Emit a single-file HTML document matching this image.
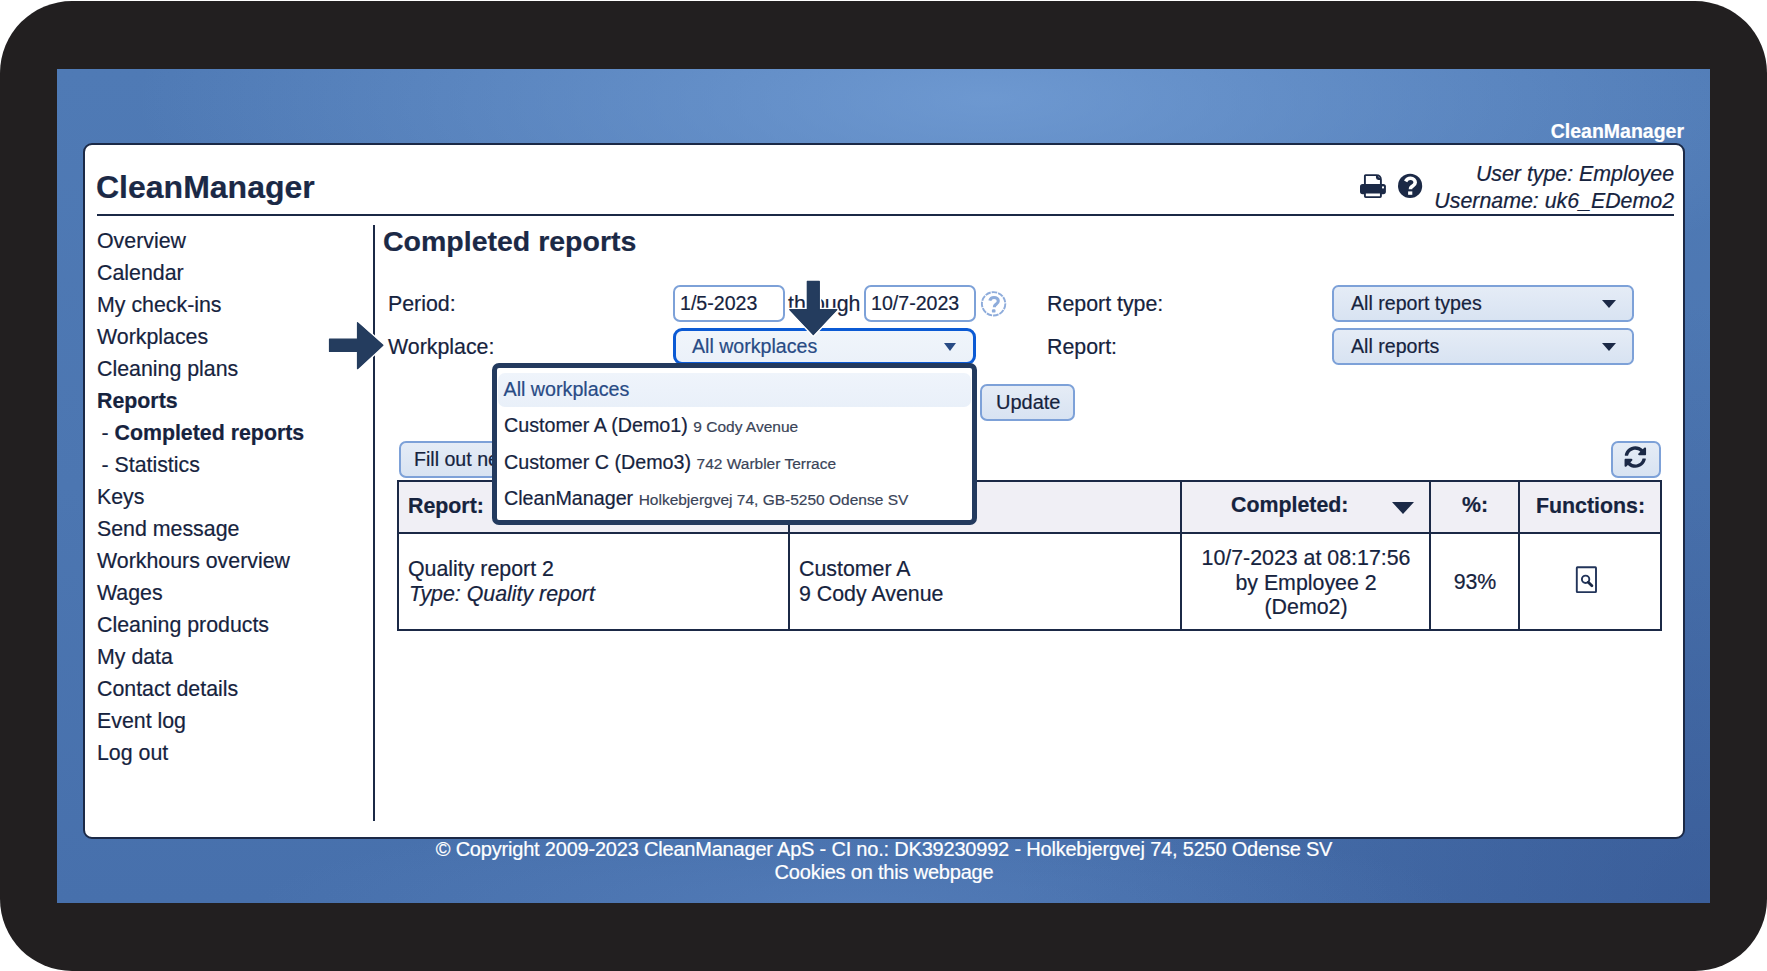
<!DOCTYPE html>
<html><head><meta charset="utf-8">
<style>
html,body{margin:0;padding:0;width:1767px;height:971px;overflow:hidden;background:#fff;}
body{position:relative;font-family:"Liberation Sans",sans-serif;color:#16233e;-webkit-text-stroke:0.2px currentColor;}
.a{position:absolute;white-space:nowrap;}
#frame{position:absolute;left:0;top:1px;width:1767px;height:970px;background:#221f20;border-radius:72px;}
#bg{position:absolute;left:57px;top:69px;width:1653px;height:834px;overflow:hidden;
 background:
  radial-gradient(ellipse 850px 240px at 930px 30px, rgba(122,165,220,0.7), rgba(122,165,220,0) 100%),
  radial-gradient(ellipse 600px 90px at 800px 834px, rgba(100,140,200,0.35), rgba(100,140,200,0) 100%),
  radial-gradient(ellipse 700px 600px at 1653px 834px, rgba(35,60,120,0.35), rgba(35,60,120,0) 100%),
  linear-gradient(180deg,#4f7ab5 0%,#4c76b1 50%,#4770ac 100%);}
#panel{position:absolute;left:83px;top:143px;width:1598px;height:692px;background:#fff;border:2px solid #1b2946;border-radius:9px;}
.t21{font-size:21.35px;line-height:21px;margin-top:1px;}
.t20{font-size:19.6px;line-height:20px;}
.b{font-weight:bold;}
.i{font-style:italic;}
.menu{position:absolute;left:97px;margin-top:1px;font-size:21.35px;line-height:21px;white-space:nowrap;}
.inp{position:absolute;box-sizing:border-box;border:2px solid #7da1d8;border-radius:7px;background:#fff;}
.sel{position:absolute;box-sizing:border-box;border:2px solid #7da1d8;border-radius:6.5px;background:linear-gradient(180deg,#e5ecf6,#d8e3f2);}
.caret{position:absolute;width:0;height:0;border-left:7px solid transparent;border-right:7px solid transparent;border-top:8px solid #1b2946;}
.btn{position:absolute;box-sizing:border-box;border:2px solid #7da1d8;border-radius:7px;background:linear-gradient(180deg,#e5ecf6,#d8e3f2);}
</style></head><body>
<div id="frame"></div>
<div id="bg"></div>
<div class="a b" style="left:1500px;width:1184px;left:500px;text-align:right;top:121px;font-size:19.5px;line-height:20px;color:#fff;">CleanManager</div>
<div id="panel"></div>

<!-- header -->
<div class="a b" style="left:96px;top:171px;font-size:32px;line-height:32px;color:#1b2946;">CleanManager</div>
<div class="a" style="left:97px;top:214px;width:1577px;height:2px;background:#1b2946;"></div>
<div class="a i t21" style="left:1274px;width:400px;text-align:right;top:163px;">User type: Employee</div>
<div class="a i t21" style="left:1274px;width:400px;text-align:right;top:190px;">Username: uk6_EDemo2</div>

<!-- sidebar -->
<div class="a" style="left:373px;top:225px;width:2px;height:596px;background:#1b2946;"></div>
<div class="menu" style="top:230px">Overview</div>
<div class="menu" style="top:262px">Calendar</div>
<div class="menu" style="top:294px">My check-ins</div>
<div class="menu" style="top:326px">Workplaces</div>
<div class="menu" style="top:358px">Cleaning plans</div>
<div class="menu b" style="top:390px">Reports</div>
<div class="menu" style="top:422px;left:95.5px">&nbsp;- <b>Completed reports</b></div>
<div class="menu" style="top:454px;left:95.5px">&nbsp;- Statistics</div>
<div class="menu" style="top:486px">Keys</div>
<div class="menu" style="top:518px">Send message</div>
<div class="menu" style="top:550px">Workhours overview</div>
<div class="menu" style="top:582px">Wages</div>
<div class="menu" style="top:614px">Cleaning products</div>
<div class="menu" style="top:646px">My data</div>
<div class="menu" style="top:678px">Contact details</div>
<div class="menu" style="top:710px">Event log</div>
<div class="menu" style="top:742px">Log out</div>


<!-- content -->
<div class="a b" style="left:383px;top:227px;font-size:28.5px;line-height:28px;color:#1b2946;">Completed reports</div>
<div class="a t21" style="left:388px;top:293px;">Period:</div>
<div class="a t21" style="left:388px;top:336px;">Workplace:</div>
<div class="inp" style="left:673px;top:285px;width:112px;height:37px;"></div>
<div class="a t20" style="left:680px;top:293px;">1/5-2023</div>
<div class="a t21" style="left:788px;top:293px;">through</div>
<div class="inp" style="left:864px;top:285px;width:112px;height:37px;"></div>
<div class="a t20" style="left:871px;top:293px;">10/7-2023</div>
<div class="a t21" style="left:1047px;top:293px;">Report type:</div>
<div class="a t21" style="left:1047px;top:336px;">Report:</div>
<div class="sel" style="left:1332px;top:285px;width:302px;height:37px;"></div>
<div class="a t20" style="left:1351px;top:293px;">All report types</div>
<div class="caret" style="left:1602px;top:300px;"></div>
<div class="sel" style="left:1332px;top:328px;width:302px;height:37px;"></div>
<div class="a t20" style="left:1351px;top:336px;">All reports</div>
<div class="caret" style="left:1602px;top:343px;"></div>
<div class="sel" style="left:673px;top:328px;width:303px;height:37px;border:3.6px solid #0b5ad4;border-radius:9px;background:linear-gradient(180deg,#f0f5fb,#ebf1f9);"></div>
<div class="a t20" style="left:692px;top:336px;color:#284b85;">All workplaces</div>
<div class="caret" style="left:943.5px;top:342.5px;border-left-width:6.8px;border-right-width:6.8px;border-top-width:8px;border-top-color:#284b85;"></div>
<div class="btn" style="left:980px;top:384px;width:95px;height:37px;"></div>
<div class="a" style="left:996px;top:392px;font-size:20px;line-height:20px;">Update</div>
<div class="btn" style="left:399px;top:441px;width:120px;height:37px;"></div>
<div class="a t20" style="left:414px;top:449px;">Fill out new</div>
<div class="btn" style="left:1611px;top:441px;width:50px;height:37px;"></div>

<!-- table -->
<div class="a" style="left:398px;top:481px;width:1262px;height:51px;background:#f0eff5;"></div>
<div class="a" style="left:397px;top:480px;width:1265px;height:2px;background:#1b2946;"></div>
<div class="a" style="left:397px;top:532px;width:1265px;height:2px;background:#1b2946;"></div>
<div class="a" style="left:397px;top:629px;width:1265px;height:2px;background:#1b2946;"></div>
<div class="a" style="left:397px;top:480px;width:2px;height:151px;background:#1b2946;"></div>
<div class="a" style="left:1660px;top:480px;width:2px;height:151px;background:#1b2946;"></div>
<div class="a" style="left:788px;top:480px;width:2px;height:151px;background:#1b2946;"></div>
<div class="a" style="left:1180px;top:480px;width:2px;height:151px;background:#1b2946;"></div>
<div class="a" style="left:1429px;top:480px;width:2px;height:151px;background:#1b2946;"></div>
<div class="a" style="left:1518px;top:480px;width:2px;height:151px;background:#1b2946;"></div>
<div class="a b t21" style="left:408px;top:495px;">Report:</div>
<div class="a b t21" style="left:1231px;top:494px;">Completed:</div>
<div class="caret" style="left:1392px;top:502px;border-left-width:11.5px;border-right-width:11.5px;border-top-width:12px;"></div>
<div class="a b t21" style="left:1431px;width:88px;text-align:center;top:494px;">%:</div>
<div class="a b t21" style="left:1520px;width:141px;text-align:center;top:495px;">Functions:</div>
<div class="a t21" style="left:408px;top:558px;">Quality report 2</div>
<div class="a t21 i" style="left:409px;top:583px;">Type: Quality report</div>
<div class="a t21" style="left:799px;top:558px;">Customer A</div>
<div class="a t21" style="left:799px;top:583px;">9 Cody Avenue</div>
<div class="a t21" style="left:1182px;width:248px;text-align:center;top:545px;line-height:24.5px;">10/7-2023 at 08:17:56<br>by Employee 2<br>(Demo2)</div>
<div class="a t21" style="left:1431px;width:88px;text-align:center;top:571px;">93%</div>

<!-- dropdown -->
<div class="a" style="left:492px;top:363px;width:475px;height:152px;border:5px solid #233a5e;border-radius:7px;background:#fff;"></div>
<div class="a" style="left:498px;top:372.5px;width:472.5px;height:34px;border-radius:7px;background:linear-gradient(180deg,#eff4fb,#e9f0f9);"></div>
<div class="a" style="left:503.5px;top:378.5px;font-size:19.7px;line-height:20px;color:#284b85;">All workplaces</div>
<div class="a" style="left:504px;top:415px;font-size:19.7px;line-height:20px;">Customer A (Demo1) <span style="font-size:15.5px;color:#3a4458;">9 Cody Avenue</span></div>
<div class="a" style="left:504px;top:452px;font-size:19.7px;line-height:20px;">Customer C (Demo3) <span style="font-size:15.5px;color:#3a4458;">742 Warbler Terrace</span></div>
<div class="a" style="left:504px;top:488px;font-size:19.7px;line-height:20px;">CleanManager <span style="font-size:15.5px;color:#3a4458;">Holkebjergvej 74, GB-5250 Odense SV</span></div>


<!-- icons -->
<svg class="a" style="left:0;top:0;" width="1767" height="971" viewBox="0 0 1767 971">
 <!-- printer -->
 <path d="M1364.9,186 V175.8 Q1364.9,175.1 1365.6,175.1 H1376.2 Q1380.9,175.1 1380.9,179.8 V186" fill="#fff" stroke="#1b2946" stroke-width="1.9"/>
 <path d="M1376.9,175.4 V177.6 Q1376.9,179.1 1378.4,179.1 H1380.6" fill="#1b2946" stroke="#1b2946" stroke-width="1.9"/>
 <rect x="1360" y="184" width="25.9" height="10.2" rx="2.6" fill="#1b2946"/>
 <rect x="1382" y="186.4" width="2" height="2" fill="#fff"/>
 <rect x="1364.9" y="192.6" width="16" height="4.5" rx="0.8" fill="#fff" stroke="#1b2946" stroke-width="1.9"/>
 <!-- question circle -->
 <circle cx="1410.1" cy="185.9" r="12.1" fill="#1b2946"/>
 <path d="M1405.6,181.3 c1.2,-2.2 3,-3.2 5,-3.1 c2.6,0.1 4.6,1.9 4.6,4.2 c0,2.6 -2.4,3.2 -3.9,4.6 c-0.6,0.6 -0.8,1.2 -0.8,2.3" fill="none" stroke="#fff" stroke-width="3.6"/>
 <rect x="1408.1" y="191.4" width="4.2" height="3.4" fill="#fff"/>
 <!-- help dashed circle -->
 <circle cx="993.6" cy="303.8" r="11.7" fill="none" stroke="#8eacdb" stroke-width="1.9" stroke-dasharray="5.6 1"/>
 <path d="M989.8,300.6 c0.6,-2.2 2.2,-3.1 4.2,-3.1 c2.6,0 4.3,1.5 4.3,3.4 c0,2.4 -2.3,3.2 -3.3,4.4 c-0.4,0.5 -0.6,1.1 -0.6,2" fill="none" stroke="#8eacdb" stroke-width="3.1"/>
 <rect x="991.9" y="309.3" width="3.6" height="3.3" rx="1.2" fill="#8eacdb"/>
 <!-- right arrow -->
 <path d="M329.5,339.2 h28 v-16.6 l25.4,22.7 l-25.4,23.4 v-17.3 h-28 z" fill="#243c5e" stroke="#fff" stroke-width="4" stroke-linejoin="round" paint-order="stroke"/>
 <path d="M329.5,339.2 h28 v-16.6 l25.4,22.7 l-25.4,23.4 v-17.3 h-28 z" fill="#243c5e" stroke="#243c5e" stroke-width="1.2" stroke-linejoin="round"/>
 <!-- down arrow -->
 <path d="M807.3,281.4 h12 v28.3 h17.6 l-23.6,25 l-23.6,-25 h17.6 z" fill="#243c5e" stroke="#fff" stroke-width="4" stroke-linejoin="round" paint-order="stroke"/>
 <path d="M807.3,281.4 h12 v28.3 h17.6 l-23.6,25 l-23.6,-25 h17.6 z" fill="#243c5e" stroke="#243c5e" stroke-width="1.2" stroke-linejoin="round"/>
 <!-- refresh -->
 <g transform="translate(1624.2,446) scale(0.0434)" fill="#1b2946">
  <path d="M370.72 133.28C339.458 104.008 298.888 87.962 255.848 88c-77.458.068-144.328 53.178-162.791 126.85-1.344 5.363-6.122 9.15-11.651 9.15H24.103c-7.498 0-13.194-6.807-11.807-14.176C33.933 94.924 134.813 8 256 8c66.448 0 126.791 26.136 171.315 68.685L463.03 40.97C478.149 25.851 504 36.559 504 57.941V192c0 13.255-10.745 24-24 24H345.941c-21.382 0-32.09-25.851-16.971-40.971l41.75-41.75zM32 296h134.059c21.382 0 32.09 25.851 16.971 40.971l-41.75 41.75c31.262 29.273 71.835 45.319 114.876 45.28 77.418-.07 144.315-53.144 162.787-126.849 1.344-5.363 6.122-9.15 11.651-9.15h57.304c7.498 0 13.194 6.807 11.807 14.176C478.067 417.076 377.187 504 256 504c-66.448 0-126.791-26.136-171.315-68.685L48.97 471.03C33.851 486.149 8 475.441 8 454.059V320c0-13.255 10.745-24 24-24z"/>
 </g>
 <!-- magnifier doc -->
 <rect x="1576.8" y="567.3" width="19.2" height="24.8" rx="0.6" fill="none" stroke="#22345a" stroke-width="1.9"/>
 <circle cx="1585.6" cy="579.3" r="3.7" fill="none" stroke="#22345a" stroke-width="1.9"/>
 <path d="M1588.3,582.2 l3.6,3.6" stroke="#1b2946" stroke-width="2.8" stroke-linecap="round"/>
</svg>

<!-- footer -->
<div class="a" style="left:84px;width:1600px;text-align:center;top:838px;font-size:20px;letter-spacing:-0.2px;line-height:23px;color:#fff;">© Copyright 2009-2023 CleanManager ApS - CI no.: DK39230992 - Holkebjergvej 74, 5250 Odense SV<br>Cookies on this webpage</div>
</body></html>
